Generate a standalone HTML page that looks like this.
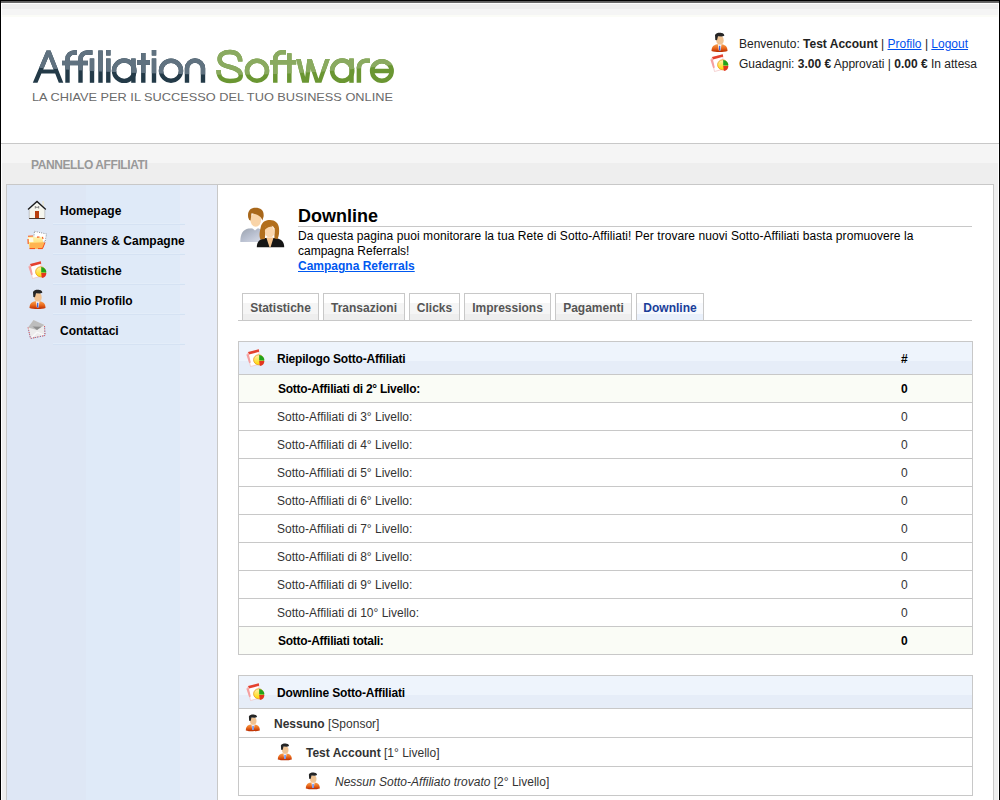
<!DOCTYPE html>
<html><head><meta charset="utf-8">
<style>
*{margin:0;padding:0;box-sizing:border-box}
html,body{width:1000px;height:800px;overflow:hidden;background:#fff}
body{position:relative;font-family:"Liberation Sans",sans-serif;font-size:12px;color:#000}
.a{position:absolute}
.t{position:absolute;white-space:nowrap;line-height:15px}
b{font-weight:bold}
a{color:#0050ee;text-decoration:underline}
</style></head><body>

<svg width="0" height="0" style="position:absolute">
<defs>
<linearGradient id="gBody" x1="0" y1="0" x2="0" y2="1"><stop offset="0" stop-color="#f7a050"/><stop offset="0.5" stop-color="#ea6a1c"/><stop offset="1" stop-color="#b82a00"/></linearGradient>
<linearGradient id="gPie" x1="0" y1="0" x2="0" y2="1"><stop offset="0" stop-color="#fff2b0"/><stop offset="1" stop-color="#ffd800"/></linearGradient>
<linearGradient id="gShirt" x1="0" y1="0" x2="1" y2="1"><stop offset="0" stop-color="#9aa2ad"/><stop offset="0.5" stop-color="#b9c0d0"/><stop offset="1" stop-color="#dcdfea"/></linearGradient>
<linearGradient id="gFold" x1="0" y1="0" x2="0" y2="1"><stop offset="0" stop-color="#fff6b8"/><stop offset="1" stop-color="#ffcf50"/></linearGradient>
<symbol id="usr" viewBox="0 0 24 24">
<path d="M5.5,21 C5.5,16.5 8,14.8 11,14.3 L16,14.3 C19,14.8 21.5,16.5 21.5,21 C18,22.3 9,22.3 5.5,21 Z" fill="url(#gBody)"/>
<path d="M12,14.3 L15.5,14.3 L14.6,20.5 L12.8,20.5 Z" fill="#fff"/>
<path d="M13.2,15.8 L14.3,15.8 L14.4,20.6 L13.1,20.6 Z" fill="#1d4fd8"/>
<ellipse cx="14" cy="10.3" rx="3.7" ry="4.3" fill="#f1c392"/>
<path d="M9,5 C10,3 13,2.6 15.5,3 C17.5,3.3 18.3,4.3 18.3,5.8 L16,6.6 L12,6.3 L11.2,9.5 L10.8,10.2 L9.3,10 Z" fill="#252525"/>
</symbol>
<symbol id="sts" viewBox="0 0 24 24">
<path d="M5.5,8 L16.5,4.8 L18,19 L8.5,21.5 Z" fill="#fff" stroke="#f2c0c0" stroke-width="0.7"/>
<path d="M6,7 L16.8,4.3 L17.2,6.8 L7,9.6 Z" fill="#e4412f"/>
<path d="M4.3,9.5 L6.8,9 L8.8,17.5 L7.2,18.2 Z" fill="#f5a0a0"/>
<circle cx="16.6" cy="14.8" r="5" fill="url(#gPie)" stroke="#e99a20" stroke-width="0.8"/>
<path d="M17.2,15.6 L17.2,10 A5.4,5.4 0 0 1 22.4,15.6 Z" fill="#22a31c"/>
<path d="M17.2,15.9 L22.4,15.9 A5.3,5.3 0 0 1 17.8,20.9 Z" fill="#e3361e"/>
</symbol>
<symbol id="home" viewBox="0 0 26 26">
<path d="M5.3,11.5 L13,4.5 L20.7,11.5 L20.7,20.5 L5.3,20.5 Z" fill="#f6f6ee"/>
<rect x="18.3" y="3" width="1.8" height="6" fill="#e9e6d6"/>
<path d="M4,11.6 L13,3.4 L21.8,11.6" fill="none" stroke="#1a1a1a" stroke-width="1.3"/>
<rect x="11" y="13" width="4" height="7.3" fill="#b8400f"/>
<rect x="5" y="20" width="16" height="1" fill="#4a3a30"/>
<path d="M11.3,8 V10.5 M14.7,8 V10.5 M11.3,9.3 H14.7" stroke="#777" stroke-width="0.9" fill="none"/>
<path d="M5.2,11.5 V20.3 M20.8,11.5 V20.3" stroke="#aaa" stroke-width="0.6"/>
</symbol>
<symbol id="fold" viewBox="0 0 26 26">
<path d="M10.5,3.3 L22.5,6 L21,14 L9.5,12 Z" fill="#fff" stroke="#555" stroke-width="0.7" stroke-dasharray="0.9,1.4"/>
<path d="M4,8.3 L9,8 L10,9.3 L18.5,8.8 L19,14.5 L20.5,15.5 L18.5,20.5 L6,20.5 L4,14 Z" fill="url(#gFold)"/>
<path d="M4.5,10 L9,10 L9.5,14 L5,14 Z" fill="#fffbe8"/>
<path d="M4,8.3 L9,8 M13,9.1 L15.5,9 M18.5,8.8 L19,11 M4,11 L4.2,16" fill="none" stroke="#f5541a" stroke-width="1.1"/>
<path d="M6,15 L20.5,14.2 L18.5,20.8 L5.5,20.8 Z" fill="#ffb350"/>
<path d="M5.5,20.6 L11,20.6 M14,20.6 L18.5,20.6 L21,14.5" fill="none" stroke="#f5481a" stroke-width="1"/>
</symbol>
<symbol id="env" viewBox="0 0 26 26">
<path d="M4,10.5 L9.5,3 L20.5,8 L21,18.5 L6.5,21.5 Z" fill="#ececec"/>
<path d="M4,10.5 L9.5,3 L20.5,8 L13,13 Z" fill="#bdbdbd"/>
<path d="M8.5,9.5 L17.5,9.8 L13,13 Z" fill="#8e8e8e"/>
<path d="M6.5,21.5 L13,15.2 L21,18.5" fill="none" stroke="#fafafa" stroke-width="1.3"/>
<path d="M4,10.5 L6.5,21.5 L21,18.5 L20.5,8" fill="none" stroke="#d84040" stroke-width="1" stroke-dasharray="1,1.3"/>
<path d="M4.3,11.8 L6.6,21.5 L21,18.5 L20.6,9" fill="none" stroke="#4a70c0" stroke-width="0.8" stroke-dasharray="0.8,2.2" stroke-dashoffset="1.2"/>
</symbol>
<symbol id="users" viewBox="0 0 54 50">
<path d="M4.3,40 C4.3,31.5 7,27.8 12.5,26.6 L22,26.3 C25.5,27 27.5,30 27.5,40 Z" fill="url(#gShirt)"/>
<path d="M15.5,25.6 L22.5,25.6 L19,28.6 Z" fill="#fff"/>
<ellipse cx="19.7" cy="17.8" rx="5.4" ry="6.9" fill="#f9d4a8"/>
<path d="M12.2,15.5 C11.2,9 14.5,5.8 19.5,5.8 C24.8,5.8 28.2,8.5 27.6,14.5 L26.4,18.5 C25,14.5 22,12.5 15.5,11.3 L14.6,18.5 L13.2,18 Z" fill="#a8671a"/>
<path d="M20.8,45.2 C20.8,39.5 24,36.6 29.5,36 L39,36 C45.2,36.6 48.2,39.6 48.2,45.2 Z" fill="#151515"/>
<path d="M30.3,35.5 L37.6,35.5 L34.6,45 L33.4,45 Z" fill="#f5c48e"/>
<path d="M24.5,37.5 C22.5,33.5 24,28.5 25,24 C26.5,19.5 30,18 34,18 C39,18 42.6,21 43,26 C43.4,30 43,34 41.6,37 L38.4,36.5 L38.5,26 L30,25 L28.8,37 Z" fill="#b26f1c"/>
<ellipse cx="33.8" cy="29" rx="4.9" ry="6.6" fill="#fad6ac"/>
<path d="M28.4,28 C29,23.5 31.8,21.3 35.5,21.3 C37.8,21.3 39.2,22.8 39.4,25 C36,23.8 32,24.5 28.4,28 Z" fill="#b26f1c"/>
<path d="M35.5,23.5 C37.5,24 38.5,26 38.2,29 C37.5,27 36.5,25 35.5,23.5 Z" fill="#fff3e4" opacity="0.8"/>
</symbol>
</defs>
</svg>

<!-- frame -->
<div class="a" style="left:0;top:0;width:1000px;height:1px;background:#000"></div>
<div class="a" style="left:1px;top:1px;width:998px;height:2px;background:linear-gradient(#5a5a5a,#6e6e6e)"></div>
<div class="a" style="left:0;top:0;width:1px;height:800px;background:#000"></div>
<div class="a" style="left:999px;top:0;width:1px;height:800px;background:#000"></div>
<!-- header top gradient -->
<div class="a" style="left:2px;top:4px;width:996px;height:5px;background:#eeeeee"></div>
<div class="a" style="left:2px;top:9px;width:996px;height:6px;background:#f5f5f5"></div>
<div class="a" style="left:2px;top:15px;width:996px;height:2px;background:#fbfcf7"></div>


<!-- logo -->
<svg class="a" style="left:0;top:0" width="420" height="110" viewBox="0 0 420 110">
<defs>
<clipPath id="gl"><path d="M0,0 H420 V62 L395,64.8 L370,67.5 L345,69.8 L320,71.8 L289,73.6 L260,74.4 L230,74.75 L200,74.5 L150,73.2 L100,71.4 L48,68.5 L0,65 Z"/></clipPath>
<g id="aff">
<path d="M32.8,82.8 L46.5,50.5 L50.5,50.5 L63.3,82.8 L58.8,82.8 L55.2,73.6 L41.4,73.6 L37.5,82.8 Z M48.5,56.8 L53.6,69.4 L43.2,69.4 Z" fill-rule="evenodd" stroke="none"/>
<g fill="none" stroke-width="4.4">
<path d="M67.5,82.8 V59 A6.5,6.5 0 0 1 74,52.5 H77"/>
<path d="M80.5,82.8 V59 A6.5,6.5 0 0 1 87,52.5 H92.5"/>
<path d="M62,63 H88"/>
<path d="M92,58.5 V82.8"/>
<path d="M100.5,50.5 V82.8"/>
<path d="M108.3,50 V55.5 M108.3,58.5 V82.8"/>
<circle cx="124.2" cy="70.7" r="10.2"/>
<path d="M133.4,58.5 V82.8"/>
<path d="M143.3,53 V82.8 M137,62.5 H150"/>
<path d="M154,50 V55.5 M154,58.5 V82.8"/>
<circle cx="171" cy="70.7" r="10"/>
<path d="M187,82.8 V68.5 A8,8 0 0 1 203,68.5 V82.8"/>
</g>
</g>
<g id="sof">
<g fill="none" stroke-width="4.4">
<path d="M240.3,61.5 C240.3,55 236,52 230,52 C223,52 219.6,55 219.6,59 C219.6,64 224,65.5 230,67 C236.5,68.5 240.8,70.5 240.8,75.5 C240.8,79.5 236.5,81 230,81 C222.5,81 218.5,78 218.5,70"/>
</g>
<g fill="none" stroke-width="4.5">
<circle cx="257" cy="70.7" r="10"/>
<path d="M275.3,82.8 V59 A6.5,6.5 0 0 1 281.8,52.3 H286"/>
<path d="M270,62.3 H296.2"/>
<path d="M289.3,53.3 V82.8"/>
<circle cx="342.2" cy="70.7" r="10.1"/>
<path d="M351.5,58.5 V82.8"/>
<path d="M358.9,82.8 V67.5 A6.7,6.7 0 0 1 365.6,60.8 H369.8"/>
<path d="M372.3,71 H391.5"/><circle cx="381.9" cy="71" r="9.8"/>
</g>
<path d="M296.2,59 L300.7,59 L306.6,82.8 L302.2,82.8 Z M307.4,59 L311.8,59 L308.8,82.8 L304.4,82.8 Z M307.4,59 L311.8,59 L319.8,82.8 L315.4,82.8 Z M325.3,59 L329.8,59 L321.4,82.8 L317,82.8 Z" stroke="none"/>
</g>
</defs>
<g fill="#233a48" stroke="#233a48"><use href="#aff"/></g>
<g fill="#607280" stroke="#607280" clip-path="url(#gl)"><use href="#aff"/></g>
<g fill="#6a9632" stroke="#6a9632"><use href="#sof"/></g>
<g fill="#8aaa60" stroke="#8aaa60" clip-path="url(#gl)"><use href="#sof"/></g>
</svg>
<div class="t" id="tag" style="left:32px;top:90px;font-size:11px;line-height:14px;color:#6a6a6a;transform:scaleX(1.16);transform-origin:0 0">LA CHIAVE PER IL SUCCESSO DEL TUO BUSINESS ONLINE</div>

<!-- nav band -->
<div class="a" style="left:1px;top:143px;width:998px;height:1px;background:#c8c8c8"></div>
<div class="a" style="left:2px;top:144px;width:996px;height:19px;background:#f5f5f5"></div>
<div class="a" style="left:2px;top:163px;width:996px;height:637px;background:#eeeeee"></div>
<div class="t" style="left:31px;top:158px;color:#999;font-weight:bold;letter-spacing:-0.41px">PANNELLO AFFILIATI</div>

<!-- sidebar -->
<div class="a" style="left:6px;top:184px;width:212px;height:616px;border-top:1px solid #c8c8c8;border-left:1px solid #c8c8c8;border-right:1px solid #c8c8c8;background:linear-gradient(90deg,#dee7f5 0,#dee7f5 79px,#dfeaf8 79px,#dfeaf8 173px,#e6ecf8 173px)"></div>

<!-- content -->
<div class="a" style="left:217px;top:184px;width:777px;height:616px;border-top:1px solid #c8c8c8;border-left:1px solid #c8c8c8;border-right:1px solid #c8c8c8;background:#fff"></div>


<!-- header right -->
<div class="t" id="hw" style="left:739px;top:37px;color:#222">Benvenuto: <b>Test Account</b> | <a>Profilo</a> | <a>Logout</a></div>
<div class="t" id="hg" style="left:739px;top:57px;color:#222">Guadagni: <b>3.00 &euro;</b> Approvati | <b>0.00 &euro;</b> In attesa</div>

<!-- menu -->
<div class="a" style="left:53px;top:223px;width:132px;height:2px;background:linear-gradient(#e3edf9 0,#e3edf9 1px,#d5e2f3 1px)"></div>
<div class="a" style="left:53px;top:253px;width:132px;height:2px;background:linear-gradient(#e3edf9 0,#e3edf9 1px,#d5e2f3 1px)"></div>
<div class="a" style="left:53px;top:283px;width:132px;height:2px;background:linear-gradient(#e3edf9 0,#e3edf9 1px,#d5e2f3 1px)"></div>
<div class="a" style="left:53px;top:313px;width:132px;height:2px;background:linear-gradient(#e3edf9 0,#e3edf9 1px,#d5e2f3 1px)"></div>
<div class="a" style="left:53px;top:343px;width:132px;height:2px;background:linear-gradient(#e3edf9 0,#e3edf9 1px,#d5e2f3 1px)"></div>

<div class="t" style="left:60px;top:204px;font-weight:bold">Homepage</div>
<div class="t" style="left:60px;top:234px;font-weight:bold">Banners &amp; Campagne</div>
<div class="t" style="left:61px;top:264px;font-weight:bold">Statistiche</div>
<div class="t" style="left:60px;top:294px;font-weight:bold">Il mio Profilo</div>
<div class="t" style="left:60px;top:324px;font-weight:bold">Contattaci</div>

<!-- page heading -->
<div class="t" style="left:298px;top:206px;font-size:18px;line-height:20px;font-weight:bold">Downline</div>
<div class="a" style="left:298px;top:226px;width:674px;height:1px;background:#c8c8c8"></div>
<div class="t" style="left:298px;top:229px;letter-spacing:0.076px">Da questa pagina puoi monitorare la tua Rete di Sotto-Affiliati! Per trovare nuovi Sotto-Affiliati basta promuovere la</div>
<div class="t" style="left:298px;top:244px;">campagna Referrals!</div>
<div class="t" style="left:298px;top:259px;font-weight:bold"><a style="color:#0058f0">Campagna Referrals</a></div>

<!-- tabs -->
<div class="a" style="left:238px;top:320px;width:734px;height:1px;background:#c8c8c8"></div>
<div class="a" style="left:242px;top:293px;width:77px;height:28px;border:1px solid #c8c8c8;border-bottom:1px solid #c8c8c8;background:linear-gradient(#fff 0,#fff 9px,#f5f5f5 9px,#f5f5f5 20px,#eee 20px);color:#555;font-weight:bold;text-align:center;line-height:28px">Statistiche</div>
<div class="a" style="left:323px;top:293px;width:82px;height:28px;border:1px solid #c8c8c8;border-bottom:1px solid #c8c8c8;background:linear-gradient(#fff 0,#fff 9px,#f5f5f5 9px,#f5f5f5 20px,#eee 20px);color:#555;font-weight:bold;text-align:center;line-height:28px">Transazioni</div>
<div class="a" style="left:409px;top:293px;width:51px;height:28px;border:1px solid #c8c8c8;border-bottom:1px solid #c8c8c8;background:linear-gradient(#fff 0,#fff 9px,#f5f5f5 9px,#f5f5f5 20px,#eee 20px);color:#555;font-weight:bold;text-align:center;line-height:28px">Clicks</div>
<div class="a" style="left:464px;top:293px;width:87px;height:28px;border:1px solid #c8c8c8;border-bottom:1px solid #c8c8c8;background:linear-gradient(#fff 0,#fff 9px,#f5f5f5 9px,#f5f5f5 20px,#eee 20px);color:#555;font-weight:bold;text-align:center;line-height:28px">Impressions</div>
<div class="a" style="left:555px;top:293px;width:77px;height:28px;border:1px solid #c8c8c8;border-bottom:1px solid #c8c8c8;background:linear-gradient(#fff 0,#fff 9px,#f5f5f5 9px,#f5f5f5 20px,#eee 20px);color:#555;font-weight:bold;text-align:center;line-height:28px">Pagamenti</div>
<div class="a" style="left:636px;top:293px;width:68px;height:28px;border:1px solid #c8c8c8;border-bottom:1px solid #c8c8c8;background:linear-gradient(#fff 0,#fff 9px,#f7f9fd 9px,#f7f9fd 20px,#e9f0fb 20px);color:#1a3d99;font-weight:bold;text-align:center;line-height:28px">Downline</div>

<!-- table1 -->
<div class="a" style="left:238px;top:341px;width:735px;height:314px;border:1px solid #c8c8c8;background:#fff"></div>
<div class="a" style="left:239px;top:342px;width:733px;height:32px;background:linear-gradient(#eef4fc 0,#eef4fc 19px,#e6edf8 19px)"></div>
<div class="a" style="left:239px;top:374px;width:733px;height:1px;background:#c8c8c8"></div>
<div class="t" style="left:277px;top:352px;font-weight:bold;letter-spacing:-0.2px">Riepilogo Sotto-Affiliati</div>
<div class="t" style="left:901px;top:352px;font-weight:bold">#</div>
<div class="a" style="left:239px;top:375px;width:733px;height:27px;background:#fafcf6"></div>
<div class="a" style="left:239px;top:402px;width:733px;height:1px;background:#c8c8c8"></div>
<div class="t" style="left:278px;top:382px;font-weight:bold;letter-spacing:-0.25px">Sotto-Affiliati di 2&deg; Livello:</div>
<div class="t" style="left:901px;top:382px;font-weight:bold;">0</div>
<div class="a" style="left:239px;top:430px;width:733px;height:1px;background:#c8c8c8"></div>
<div class="t" style="left:277px;top:410px;color:#333;">Sotto-Affiliati di 3&deg; Livello:</div>
<div class="t" style="left:901px;top:410px;color:#333;">0</div>
<div class="a" style="left:239px;top:458px;width:733px;height:1px;background:#c8c8c8"></div>
<div class="t" style="left:277px;top:438px;color:#333;">Sotto-Affiliati di 4&deg; Livello:</div>
<div class="t" style="left:901px;top:438px;color:#333;">0</div>
<div class="a" style="left:239px;top:486px;width:733px;height:1px;background:#c8c8c8"></div>
<div class="t" style="left:277px;top:466px;color:#333;">Sotto-Affiliati di 5&deg; Livello:</div>
<div class="t" style="left:901px;top:466px;color:#333;">0</div>
<div class="a" style="left:239px;top:514px;width:733px;height:1px;background:#c8c8c8"></div>
<div class="t" style="left:277px;top:494px;color:#333;">Sotto-Affiliati di 6&deg; Livello:</div>
<div class="t" style="left:901px;top:494px;color:#333;">0</div>
<div class="a" style="left:239px;top:542px;width:733px;height:1px;background:#c8c8c8"></div>
<div class="t" style="left:277px;top:522px;color:#333;">Sotto-Affiliati di 7&deg; Livello:</div>
<div class="t" style="left:901px;top:522px;color:#333;">0</div>
<div class="a" style="left:239px;top:570px;width:733px;height:1px;background:#c8c8c8"></div>
<div class="t" style="left:277px;top:550px;color:#333;">Sotto-Affiliati di 8&deg; Livello:</div>
<div class="t" style="left:901px;top:550px;color:#333;">0</div>
<div class="a" style="left:239px;top:598px;width:733px;height:1px;background:#c8c8c8"></div>
<div class="t" style="left:277px;top:578px;color:#333;">Sotto-Affiliati di 9&deg; Livello:</div>
<div class="t" style="left:901px;top:578px;color:#333;">0</div>
<div class="a" style="left:239px;top:626px;width:733px;height:1px;background:#c8c8c8"></div>
<div class="t" style="left:277px;top:606px;color:#333;">Sotto-Affiliati di 10&deg; Livello:</div>
<div class="t" style="left:901px;top:606px;color:#333;">0</div>
<div class="a" style="left:239px;top:627px;width:733px;height:27px;background:#fafcf6"></div>
<div class="t" style="left:278px;top:634px;font-weight:bold;letter-spacing:-0.25px">Sotto-Affiliati totali:</div>
<div class="t" style="left:901px;top:634px;font-weight:bold;">0</div>

<!-- table2 -->
<div class="a" style="left:238px;top:675px;width:735px;height:121px;border:1px solid #c8c8c8;background:#fff"></div>
<div class="a" style="left:239px;top:676px;width:733px;height:32px;background:linear-gradient(#eef4fc 0,#eef4fc 19px,#e6edf8 19px)"></div>
<div class="a" style="left:239px;top:708px;width:733px;height:1px;background:#c8c8c8"></div>
<div class="a" style="left:239px;top:737px;width:733px;height:1px;background:#c8c8c8"></div>
<div class="a" style="left:239px;top:766px;width:733px;height:1px;background:#c8c8c8"></div>
<div class="t" style="left:277px;top:686px;font-weight:bold;letter-spacing:-0.17px">Downline Sotto-Affiliati</div>
<div class="t" style="left:274px;top:717px;color:#333"><b>Nessuno</b> [Sponsor]</div>
<div class="t" style="left:306px;top:746px;color:#333"><b>Test Account</b> [1&deg; Livello]</div>
<div class="t" style="left:335px;top:775px;color:#333"><i>Nessun Sotto-Affiliato trovato</i> [2&deg; Livello]</div>

<!-- icons -->
<svg class="a" style="left:706px;top:30px" width="24" height="24"><use href="#usr"/></svg>
<svg class="a" style="left:706px;top:50px" width="24" height="24"><use href="#sts"/></svg>
<svg class="a" style="left:24px;top:198px" width="26" height="26"><use href="#home"/></svg>
<svg class="a" style="left:24px;top:228px" width="26" height="26"><use href="#fold"/></svg>
<svg class="a" style="left:24px;top:257px" width="24" height="24"><use href="#sts"/></svg>
<svg class="a" style="left:24px;top:287px" width="24" height="24"><use href="#usr"/></svg>
<svg class="a" style="left:24px;top:317px" width="26" height="26"><use href="#env"/></svg>
<svg class="a" style="left:236px;top:202px" width="54" height="50"><use href="#users"/></svg>
<svg class="a" style="left:242px;top:345px" width="24" height="24"><use href="#sts"/></svg>
<svg class="a" style="left:242px;top:679px" width="24" height="24"><use href="#sts"/></svg>
<svg class="a" style="left:241px;top:712px" width="21" height="21" viewBox="0 0 24 24"><use href="#usr"/></svg>
<svg class="a" style="left:273px;top:741px" width="21" height="21" viewBox="0 0 24 24"><use href="#usr"/></svg>
<svg class="a" style="left:301px;top:770px" width="21" height="21" viewBox="0 0 24 24"><use href="#usr"/></svg>
</body></html>
